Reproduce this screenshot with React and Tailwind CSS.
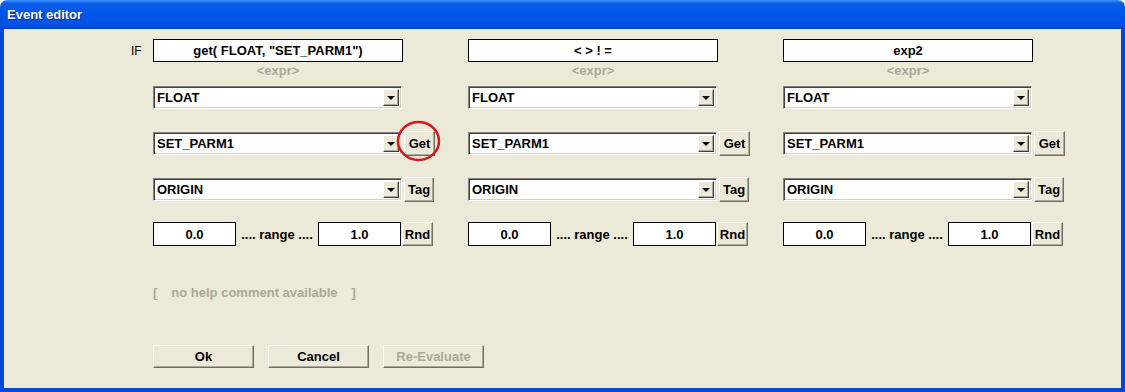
import React from "react";

const font = { fontFamily: '"Liberation Sans", Arial, sans-serif' };

function RaisedButton({ children, className = "", disabled }) {
  return (
    <div
      className={`flex items-center justify-center bg-[#ece9d8] border border-t-white border-l-white border-b-[#716f64] border-r-[#716f64] shadow-[inset_-1px_-1px_0_#aca899] text-[13px] font-bold leading-none ${
        disabled ? "text-[#aca899]" : "text-black"
      } ${className}`}
    >
      {children}
    </div>
  );
}

function Dropdown({ value }) {
  return (
    <div className="flex h-[23px] w-[249px] items-center bg-white border border-t-[#808080] border-l-[#808080] border-b-white border-r-white shadow-[inset_1px_1px_0_#404040,inset_-1px_-1px_0_#d4d0c8]">
      <span className="flex-1 pl-[3px] text-[13px] font-bold text-black leading-none">
        {value}
      </span>
      <div className="mr-[2px] flex h-[17px] w-[16px] items-center justify-center bg-[#ece9d8] border border-t-white border-l-white border-b-[#404040] border-r-[#404040] shadow-[inset_-1px_-1px_0_#aca899]">
        <div className="h-0 w-0 border-l-[4px] border-r-[4px] border-t-[4px] border-l-transparent border-r-transparent border-t-black" />
      </div>
    </div>
  );
}

function Column({ expr, circled }) {
  return (
    <div className="flex w-[315px] flex-col">
      <div className="flex h-[23px] w-[250px] items-center justify-center border border-black bg-white text-[13px] font-bold text-black leading-none">
        {expr}
      </div>
      <div className="flex h-[23px] w-[250px] justify-center pt-[2px] text-[13px] font-bold leading-[14px] text-[#aca899]">
        &lt;expr&gt;
      </div>
      <div className="flex h-[25px] items-center">
        <Dropdown value="FLOAT" />
      </div>
      <div className="mt-[21px] flex h-[25px] items-center">
        <Dropdown value="SET_PARM1" />
        <div className="relative ml-[2px]">
          <RaisedButton className="h-[25px] w-[31px]">Get</RaisedButton>
          {circled && (
            <svg
              className="pointer-events-none absolute left-[-8px] top-[-11px]"
              width="46"
              height="42"
              viewBox="0 0 46 42"
            >
              <ellipse
                cx="22.5"
                cy="21"
                rx="20.5"
                ry="19"
                fill="none"
                stroke="#e0141a"
                strokeWidth="2.5"
              />
            </svg>
          )}
        </div>
      </div>
      <div className="mt-[21px] flex h-[25px] items-center">
        <Dropdown value="ORIGIN" />
        <RaisedButton className="ml-[2px] h-[25px] w-[30px]">Tag</RaisedButton>
      </div>
      <div className="mt-[20px] flex h-[24px] items-center">
        <div className="flex h-[24px] w-[83px] items-center justify-center border border-black bg-white text-[13px] font-bold leading-none">
          0.0
        </div>
        <div className="flex w-[82px] justify-center text-[13px] font-bold leading-none text-black">
          .... range ....
        </div>
        <div className="flex h-[24px] w-[83px] items-center justify-center border border-black bg-white text-[13px] font-bold leading-none">
          1.0
        </div>
        <RaisedButton className="ml-[1px] h-[24px] w-[31px]">Rnd</RaisedButton>
      </div>
    </div>
  );
}

export default function App() {
  return (
    <div
      className="flex h-[392px] w-[1125px] flex-col bg-white"
      style={font}
    >
      <div className="flex h-[29px] items-center rounded-t-[7px] bg-[linear-gradient(#3d8fff_0%,#0a5de8_12%,#0056ea_45%,#0052e4_85%,#0040c8_100%)] pl-[7px]">
        <span className="text-[13px] font-bold text-white [text-shadow:1px_1px_0_#0a2a8a]">
          Event editor
        </span>
      </div>
      <div className="flex flex-1 bg-[#0646d8] px-[4px] pb-[4px]">
        <div className="flex flex-1 flex-col bg-[#ece9d8] pt-[10px]">
          <div className="flex">
            <div className="ml-[127px] flex h-[23px] w-[22px] items-center text-[12px] text-black leading-none">
              IF
            </div>
            <Column expr={'get( FLOAT, "SET_PARM1")'} circled />
            <Column expr="< > ! =" />
            <Column expr="exp2" />
          </div>
          <div className="ml-[149px] mt-[38px] flex h-[16px] items-center text-[13px] font-bold leading-none text-[#aca899]">
            <span>[</span>
            <span className="ml-[14px]">no help comment available</span>
            <span className="ml-[14px]">]</span>
          </div>
          <div className="ml-[149px] mt-[45px] flex gap-[14px]">
            <RaisedButton className="h-[23px] w-[101px]">Ok</RaisedButton>
            <RaisedButton className="h-[23px] w-[101px]">Cancel</RaisedButton>
            <RaisedButton className="h-[23px] w-[101px]" disabled>
              Re-Evaluate
            </RaisedButton>
          </div>
        </div>
      </div>
    </div>
  );
}
